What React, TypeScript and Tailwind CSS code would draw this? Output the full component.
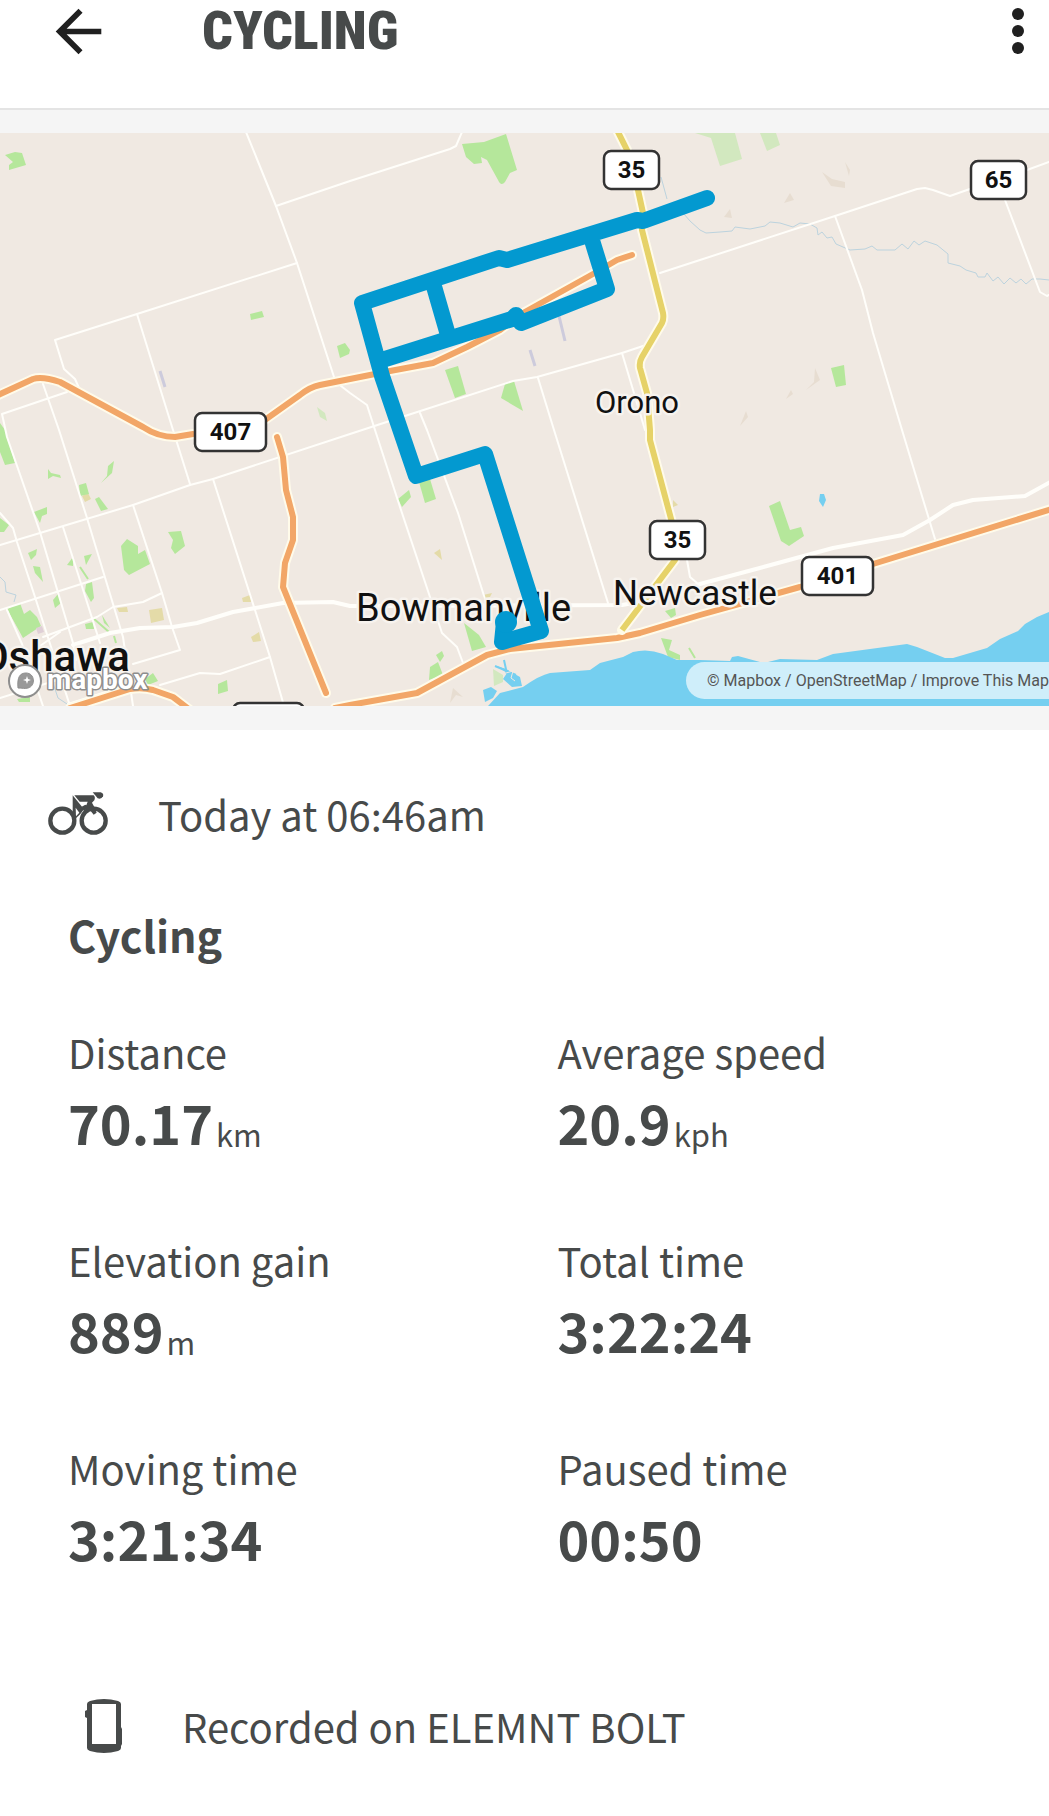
interface Stat {
  label: string;
  value: string;
  unit?: string;
}

interface Shield {
  x: number;
  y: number;
  width: number;
  text: string;
}

const STATS: Stat[] = [
  { label: 'Distance', value: '70.17', unit: 'km' },
  { label: 'Average speed', value: '20.9', unit: 'kph' },
  { label: 'Elevation gain', value: '889', unit: 'm' },
  { label: 'Total time', value: '3:22:24' },
  { label: 'Moving time', value: '3:21:34' },
  { label: 'Paused time', value: '00:50' },
];

const SHIELDS: Shield[] = [
  { x: 604, y: 151, width: 55, text: '35' },
  { x: 971, y: 161, width: 55, text: '65' },
  { x: 195, y: 413, width: 71, text: '407' },
  { x: 650, y: 521, width: 55, text: '35' },
  { x: 802, y: 557, width: 71, text: '401' },
  { x: 233, y: 703, width: 71, text: '' },
];

const MINOR_ROADS = [
  'M246 132 276 206 297 263 334 377',
  'M276 206 350 181 450 149 456 146 462 132',
  'M297 263 137 314 55 340 64 369 75 379 79 388',
  'M137 314 173 430 190 484',
  'M43 384 59 430 87 518 123 637 133 706',
  'M67 392 2 414 7 437 40 532 73 643 76 660',
  'M0 545 40 533 133 505 190 485 213 479 350 434 408 415 513 381 537 377 622 353 643 346',
  'M213 479 255 610 270 657 284 706',
  'M133 505 162 593 172 627 180 650 133 664',
  'M63 527 100 643',
  'M0 610 103 577',
  'M0 513 13 528 17 542 35 597 52 650 70 706',
  'M43 637 97 617 113 607 143 602 162 593',
  'M160 685 200 673 220 674 270 657',
  'M7 610 22 644 43 706',
  'M0 698 70 676 M20 660 60 632',
  'M68 704 125 686',
  'M341 386 350 393 367 405 375 430 400 507 442 633 457 647 463 663',
  'M420 413 427 430 458 513 490 615',
  'M538 378 554 430 608 603',
  'M622 353 645 430',
  'M660 273 700 260 835 216 917 189 925 188 933 190 950 196 967 190 1027 170 1049 162',
  'M835 216 862 290 873 333 902 430 935 539',
  'M1005 200 1040 292 1047 296 1049 295',
  'M687 560 690 577 697 583',
];

const HIGHWAYS = [
  'M-4 396 33 379Q42 376 60 382L143 427Q158 437 175 437L193 434 M262 422 300 395Q310 387 320 385L350 379 390 371 433 363 467 347 500 330 523 313 593 274 617 260 632 255',
  'M277 437 283 457 286 490 293 517 293 540 285 563 283 587 326 693',
  'M70 708 130 689Q142 687 153 690L173 697 190 710',
  'M335 708 350 705 417 693 487 655 510 649 617 638 640 633 700 615 800 587 873 564 1055 508',
];

const PARKS = [
  'M5 155 15 152 22 153 26 165 9 170 9 165 13 162Z',
  'M462 144 484 142 506 134 517 170 510 173 505 182Q501 187 498 180L487 160 481 157 482 163 474 164 466 157Z',
  'M250 314 262 311 264 317 251 320Z',
  'M337 346 345 343 350 350 349 354 340 358Z',
  'M445 370 458 366 466 394 455 398Z',
  'M505 384 514 381 523 411 501 398Z',
  'M831 368 844 365 846 385 836 387Z',
  'M0 423 5 430 15 463 5 465 0 452Z',
  'M34 512 47 507 47 514 42 516 40 523Z',
  'M79 485 86 483 89 494 80 496Z',
  'M95 499 99 497 108 509 101 511Z',
  'M48 469 51 473 60 475 61 478 53 476 48 479Z',
  'M114 461 112 473 101 483 107 476 108 466Z',
  'M121 546 127 539 138 546 138 554 145 550 150 564 129 575 124 570Z',
  'M168 532 181 531 185 546 175 554 171 548 173 540Z',
  'M28 553 37 549 36 555 31 560Z',
  'M33 566 40 567 43 582 35 573Z',
  'M84 556 92 554 86 565Z',
  'M67 565 73 557 73 566Z',
  'M86 584 92 582 94 598 91 602 85 591Z',
  'M53 600 58 594 61 603 55 608Z',
  'M7 609 20 603 24 614 30 610 37 617 41 626 23 638 17 627Z',
  'M0 518 9 525 4 532 0 532Z',
  'M85 624 93 622 94 629 86 629Z',
  'M102 615 110 628 104 623Z',
  'M145 679 153 673 158 681 148 685Z',
  'M17 699 30 697 30 702 19 702Z',
  'M218 684 227 680 228 691 218 694Z',
  'M398 499 409 490 411 497 402 507Z',
  'M419 482 430 479 436 499 425 503Z',
  'M464 623 479 635 486 647 472 651Z',
  'M430 667 438 662 443 675 429 680Z',
  'M436 655 442 651 444 656 440 662Z',
  'M665 611 675 608 676 615 671 618Z',
  'M661 638 672 640 669 650 680 655 680 660 668 657Z',
  'M769 506 780 501 790 530 801 527 804 536 789 546 781 541Z',
];

const FAINT_PARKS = [
  'M695 133 735 133 742 159 720 166 711 138Z',
  'M760 133 776 133 780 145 767 151Z',
  'M317 407 325 413 327 421 320 417Z',
  'M493 669 503 675 503 682 494 686Z',
];

const SAND = [
  'M149 610 162 608 164 620 151 623Z',
  'M117 608 127 607 128 612 119 612Z',
  'M82 496 88 493 91 499 85 502Z',
  'M242 598 250 595 251 602 243 602Z',
  'M251 637 259 632 261 641 253 642Z',
  'M434 553 440 549 442 560Z',
  'M483 595 492 593 490 597 484 599Z',
  'M673 500 678 505 673 507Z',
];

const HILLS = [
  'M822 172 832 179 845 182 845 188 831 186Z',
  'M784 203 790 193 794 200Z',
  'M724 217 730 209 732 218Z',
  'M815 368 820 380 806 390 814 382Z',
  'M786 399 791 390 793 394Z',
  'M740 426 746 411 748 417Z',
  'M845 162 850 170 849 176Z',
  'M450 703 453 688 463 697 456 695Z',
];

const STREAMS = [
  'M661 177 667 199 M684 214 690 221 700 230 706 233 720 232 732 231 735 227 750 229 765 226 770 222 780 223 793 227 800 223 810 224 817 228 818 235 822 232 827 238 832 237 836 244 843 247 850 250 865 249 872 246 877 250 895 250 902 244 908 249 914 241 919 245 925 241 937 245 948 254 948 263 960 266 966 270 976 273 978 277 985 277 987 273 993 281 998 277 1004 284 1010 278 1016 283 1021 279 1026 284 1032 279 1040 279 1049 280',
  'M0 577 5 582 6 592 16 595 14 602',
  'M53 683 58 698 67 704',
];

const REGIONAL_ROAD =
  'M617 130 627 150 638 190 643 213 642 230 663 313Q664 319 662 323L642 357Q639 362 640 368L647 393 650 430 650 440 674 530 675 560 622 630';

const ROUTE =
  'M707 198 643 221 637 220 507 260 499 258 362 303 379 365 382 376 416 476 485 454 541 631 502 642 504 622 M382 360 512 319 516 315 521 323 607 289 591 237 M433 283 448 335';

const LAKE =
  'M488 706 500 693 523 687 Q540 675 550 673L590 670 600 663 623 657 633 652Q648 648 663 654L677 660 700 660 730 661 732 657 738 656 760 662 768 662 780 659 817 660 833 654 907 644 917 647 945 658 953 658 987 648 1000 639 1018 631 1025 624 1037 617 1049 612V706Z M483 690 491 687 497 691 493 698 485 702Z M497 666 506 669 520 677 522 686 512 687 503 679 507 673Z M820 494 824 494 826 500 823 507 819 501Z';

function RouteMap() {
  return (
    <svg
      viewBox="0 133 1049 573"
      role="img"
      aria-label="Route map"
      className="block h-auto w-full bg-[#f0e9e2] font-[Roboto,sans-serif]"
    >
      <g fill="#e7ddd1">{HILLS.map((d) => <path key={d} d={d} />)}</g>
      <g fill="#d2e8bf">{FAINT_PARKS.map((d) => <path key={d} d={d} />)}</g>
      <g fill="#e4dba8">{SAND.map((d) => <path key={d} d={d} />)}</g>
      <g fill="#b5e79b">{PARKS.map((d) => <path key={d} d={d} />)}</g>
      <path d="M36 628 42 626 44 632 38 634Z" fill="#dfcfd6" />
      <path d="M80 567 88 579 M93 618 109 632 M114 636 116 643 M689 648 695 658" stroke="#b5e79b" strokeWidth="2" />
      <path d="M160 371 165 387 M530 350 535 366 M559 316 565 341" stroke="#cdcbdc" strokeWidth="3" />
      <g fill="none" stroke="#bcd3de" strokeWidth="1">{STREAMS.map((d) => <path key={d} d={d} />)}</g>
      <path d={LAKE} fill="#75cff0" />
      <path d="M495 666 516 675 M504 660 507 674" stroke="#75cff0" strokeWidth="2" />
      <path d="M506 673 513 671 511 678 515 681" fill="none" stroke="#f0e9e2" />

      <g fill="none" stroke="#fffefa" strokeLinejoin="round" strokeLinecap="round">
        <g strokeWidth="2">{MINOR_ROADS.map((d) => <path key={d} d={d} />)}</g>
        <path
          strokeWidth="4"
          d="M73 645 110 633 140 628 173 627 197 623 233 612 283 603 333 602 350 606 622 605 650 600 700 584 767 566 833 548 903 535 930 520 953 505 973 500 1025 496 1052 481"
        />
        <g strokeWidth="10" stroke="#fffbea">{HIGHWAYS.map((d) => <path key={d} d={d} />)}</g>
        <g strokeWidth="6" stroke="#f2a667">{HIGHWAYS.map((d) => <path key={d} d={d} />)}</g>
        <path strokeWidth="10" stroke="#fffbea" d={REGIONAL_ROAD} />
        <path strokeWidth="6" stroke="#e6d268" strokeLinecap="butt" d={REGIONAL_ROAD} />
      </g>

      <g fill="#111" stroke="#f7f3ee" strokeWidth="5" strokeLinejoin="round" paintOrder="stroke">
        <text x="595" y="413" fontSize="31">Orono</text>
        <text x="356" y="621" fontSize="38">Bowmanville</text>
        <text x="613" y="605" fontSize="35">Newcastle</text>
        <text x="130" y="671" fontSize="42" fontWeight="500" textAnchor="end">Oshawa</text>
      </g>

      <path d={ROUTE} fill="none" stroke="#0399d0" strokeWidth="16" strokeLinejoin="round" strokeLinecap="round" />
      <circle cx="506" cy="622" r="11" fill="#0399d0" />

      {SHIELDS.map(({ x, y, width, text }) => (
        <g key={`${x}-${y}`}>
          <rect x={x} y={y} width={width} height="38" rx="7" fill="#fff" stroke="#333" strokeWidth="2.5" />
          <text x={x + width / 2} y={y + 27} fontSize="24" fontWeight="700" fill="#111" textAnchor="middle">
            {text}
          </text>
        </g>
      ))}

      <g stroke="#8e8e8e">
        <circle cx="25" cy="681" r="16" fill="#fff" strokeWidth="2" />
        <path d="M18 688C17 677 20 673 26 673 35 673 36 686 28 688 25 689 22 688 18 688Z" fill="#999" strokeWidth="1" />
        <path d="M27 676 28 679 31 680 28 681 27 684 26 681 23 680 26 679Z" fill="#fff" stroke="none" />
        <text x="47" y="689" fontSize="28" fontWeight="700" fill="#fff" strokeWidth="3" strokeLinejoin="round" paintOrder="stroke">
          mapbox
        </text>
      </g>
    </svg>
  );
}

function BikeIcon() {
  return (
    <svg viewBox="0 0 180 130" className="w-[60px] shrink-0" fill="currentColor" aria-hidden="true">
      <circle cx="43" cy="86" r="36" fill="none" stroke="currentColor" strokeWidth="13" />
      <circle cx="137" cy="86" r="36" fill="none" stroke="currentColor" strokeWidth="13" />
      <path d="M74 10 108 52 97 66 84 79 74 76Z" />
      <path d="M83 47 94 62 84 73Z" fill="#fff" />
      <path d="M79 10H137Q143 16 139 25L132 32 141 49 145 62 135 60 129 50 114 42 119 29H95Z" />
      <path d="M134 1H158Q168 4 165 13 160 23 149 19Z" />
      <path d="M101 44 112 38 138 52 146 62 137 68 128 57 112 52 118 60 108 58Z" />
    </svg>
  );
}

function DeviceIcon() {
  return (
    <svg viewBox="0 0 38 54" className="w-[38px] shrink-0" fill="currentColor" aria-hidden="true">
      <path
        fillRule="evenodd"
        d="M2 5Q2 3 5 2 19-2 33 2 36 3 36 5V28L37 30V45L36 47V49Q36 51 33 52 19 56 5 52 2 51 2 49V19L0 18V12L2 11ZM7 5V45H31V5Z"
      />
    </svg>
  );
}

export default function App() {
  return (
    <div className="min-h-screen bg-white font-['Noto_Sans_CJK_SC',sans-serif] text-[40px] leading-[48px] text-[#474a4a]">
      <header className="border-b-2 border-[#e4e4e4] pb-[46px]">
        <div className="flex h-[62px] items-center pr-[19px] pl-[50px] text-[#202020]">
          <button type="button" aria-label="Back">
            <svg viewBox="2 2 20 20" className="size-[57px]" fill="currentColor">
              <path d="M20 11H7.830l5.590-5.590L12 4l-8 8 8 8 1.410-1.410L7.830 13H20z" />
            </svg>
          </button>
          <h1 className="ml-[95px] font-['Roboto_Condensed',Roboto,sans-serif] text-[54px] font-black text-[#474a4a]">
            CYCLING
          </h1>
          <button type="button" aria-label="More options" className="ml-auto">
            <svg viewBox="0 0 24 58" className="w-6" fill="currentColor">
              <circle cx="12" cy="12" r="6" />
              <circle cx="12" cy="29" r="6" />
              <circle cx="12" cy="46" r="6" />
            </svg>
          </button>
        </div>
      </header>

      <section className="bg-[#f5f5f5] pt-[23px] pb-6">
        <div className="relative overflow-hidden">
          <RouteMap />
          <div className="absolute right-0 bottom-[7px] flex h-[37px] items-center gap-1 rounded-l-full bg-white/65 pl-[21px] font-[Roboto,sans-serif] text-[16px] whitespace-nowrap text-[#555]">
            <a href="#mapbox">© Mapbox</a>
            <span>/</span>
            <a href="#openstreetmap">OpenStreetMap</a>
            <span>/</span>
            <a href="#improve">Improve This Map</a>
          </div>
        </div>
      </section>

      <main className="pt-[60px] pb-16">
        <div className="flex items-center gap-[50px] pl-12">
          <BikeIcon />
          <p>Today at 06:46am</p>
        </div>

        <h2 className="mt-[72px] pl-[68px] text-[43px] font-bold">Cycling</h2>

        <dl className="mt-[70px] grid grid-cols-2 gap-y-[84px] pr-0.5 pl-[68px]">
          {STATS.map(({ label, value, unit }) => (
            <div key={label}>
              <dt>{label}</dt>
              <dd className="mt-4 flex items-end gap-[3px] text-[54px] leading-[60px] font-semibold">
                {value}
                {unit && <span className="text-[31px] leading-9 font-normal">{unit}</span>}
              </dd>
            </div>
          ))}
        </dl>

        <div className="mt-[131px] flex items-center gap-[59px] pl-[85px]">
          <DeviceIcon />
          <p>Recorded on ELEMNT BOLT</p>
        </div>
      </main>
    </div>
  );
}
